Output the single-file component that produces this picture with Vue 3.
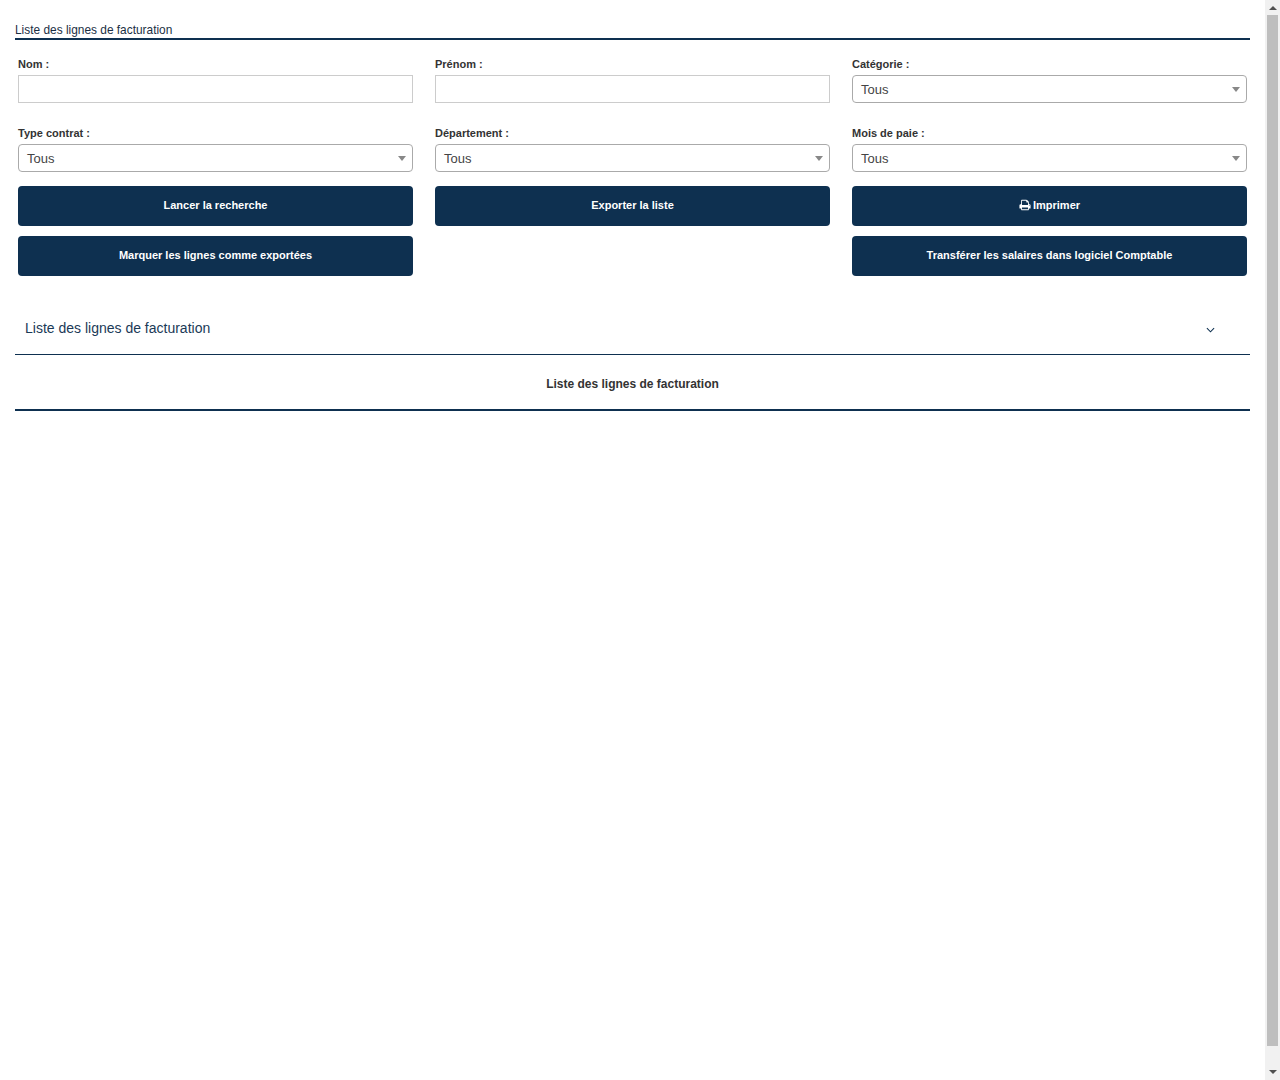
<script setup>
const fields = [
  { label: 'Nom :', type: 'input' },
  { label: 'Prénom :', type: 'input' },
  { label: 'Catégorie :', type: 'select' },
  { label: 'Type contrat :', type: 'select' },
  { label: 'Département :', type: 'select' },
  { label: 'Mois de paie :', type: 'select' },
]
</script>

<template>
  <div class="shell">
    <main class="page">
      <h1 class="title">Liste des lignes de facturation</h1>
      <form class="filters" @submit.prevent>
        <div v-for="f in fields" :key="f.label" class="field">
          <label class="label">{{ f.label }}</label>
          <input v-if="f.type === 'input'" class="control text" type="text" />
          <div v-else class="control select">
            <span>Tous</span>
            <i class="caret"></i>
          </div>
        </div>
      </form>
      <div class="actions">
        <button class="btn" type="button">Lancer la recherche</button>
        <button class="btn" type="button">Exporter la liste</button>
        <button class="btn" type="button">
          <svg class="print" viewBox="0 0 1792 1792" width="12" height="12" aria-hidden="true">
            <path fill="#fff" d="M448 1536h896v-256h-896v256zm0-640h896v-384h-160q-40 0-68-28t-28-68v-160h-640v640zm1152 64q0-26-19-45t-45-19-45 19-19 45 19 45 45 19 45-19 19-45zm128 0v416q0 13-9.5 22.5t-22.5 9.5h-224v160q0 40-28 68t-68 28h-960q-40 0-68-28t-28-68v-160h-224q-13 0-22.5-9.5t-9.5-22.5v-416q0-79 56.5-135.5t135.5-56.5h64v-544q0-40 28-68t68-28h672q40 0 88 20t76 48l152 152q28 28 48 76t20 88v256h64q79 0 135.5 56.5t56.5 135.5z"/>
          </svg>
          Imprimer
        </button>
        <button class="btn" type="button">Marquer les lignes comme exportées</button>
        <span></span>
        <button class="btn" type="button">Transférer les salaires dans logiciel Comptable</button>
      </div>
      <section class="accordion">
        <span>Liste des lignes de facturation</span>
        <svg class="chevron" viewBox="0 0 10 6" width="9" height="6" aria-hidden="true">
          <path d="M1 1l4 4 4-4" fill="none" stroke="#0e3050" stroke-width="1.2"/>
        </svg>
      </section>
      <h2 class="heading">Liste des lignes de facturation</h2>
    </main>
    <aside class="scrollbar" aria-hidden="true">
      <i class="arrow up"></i>
      <div class="thumb"></div>
      <i class="arrow down"></i>
    </aside>
  </div>
</template>

<style>
body { margin: 0; background: #fff; }
</style>

<style scoped>
.shell {
  display: flex;
  height: 1080px;
  overflow: hidden;
}
.page {
  flex: 1;
  min-width: 0;
  box-sizing: border-box;
  padding: 0 15px;
  font-family: "Liberation Sans", Arial, sans-serif;
  color: #212529;
}
.title {
  margin: 0;
  padding-top: 22px;
  height: 16px;
  font-size: 11.9px;
  font-weight: 400;
  line-height: 16px;
  color: #1b2f44;
  border-bottom: 2px solid #0e3050;
}
.filters {
  display: grid;
  grid-template-columns: repeat(3, 1fr);
  column-gap: 22px;
  row-gap: 18px;
  padding: 12px 3px 0;
}
.field { display: flex; flex-direction: column; }
.label {
  height: 23px;
  line-height: 24px;
  font-size: 11px;
  font-weight: 700;
  color: #333;
}
.control {
  box-sizing: border-box;
  height: 28px;
  width: 100%;
  background: #fff;
  margin: 0;
}
.text {
  border: 1px solid #ccc;
  border-radius: 0;
  outline: none;
}
.select {
  display: flex;
  align-items: center;
  justify-content: space-between;
  border: 1px solid #aaa;
  border-radius: 4px;
  padding: 0 6px 0 8px;
  font-size: 13px;
  color: #444;
}
.caret {
  width: 0;
  height: 0;
  border-left: 4px solid transparent;
  border-right: 4px solid transparent;
  border-top: 5px solid #888;
}
.actions {
  display: grid;
  grid-template-columns: repeat(3, 1fr);
  column-gap: 22px;
  row-gap: 10px;
  padding: 14px 3px 0;
}
.btn {
  height: 40px;
  border: 0;
  border-radius: 4px;
  background: #0e3050;
  color: #fff;
  font-family: inherit;
  font-size: 11px;
  font-weight: 700;
  padding: 0 0 2px;
}
.print {
  vertical-align: -2px;
  margin-right: -1px;
}
.accordion {
  display: flex;
  align-items: center;
  justify-content: space-between;
  height: 79px;
  padding: 26px 35px 1px 10px;
  box-sizing: border-box;
  border-bottom: 1px solid #0e3050;
  font-size: 14px;
  color: #1b3a57;
}
.chevron { margin-top: 4px; }
.heading {
  margin: 0;
  height: 54px;
  line-height: 58px;
  text-align: center;
  font-size: 12px;
  font-weight: 700;
  color: #333;
  border-bottom: 2px solid #0e3050;
}
.scrollbar {
  flex: none;
  width: 15px;
  box-sizing: border-box;
  background: #f1f1f1;
  display: flex;
  flex-direction: column;
  align-items: center;
  padding: 6px 0;
}
.arrow {
  width: 0;
  height: 0;
  border-left: 4px solid transparent;
  border-right: 4px solid transparent;
}
.up { border-bottom: 4px solid #505050; }
.down { border-top: 4px solid #505050; }
.thumb {
  width: 11px;
  height: 1031px;
  margin: 5px 0 24px;
  background: #bebebe;
}
</style>
